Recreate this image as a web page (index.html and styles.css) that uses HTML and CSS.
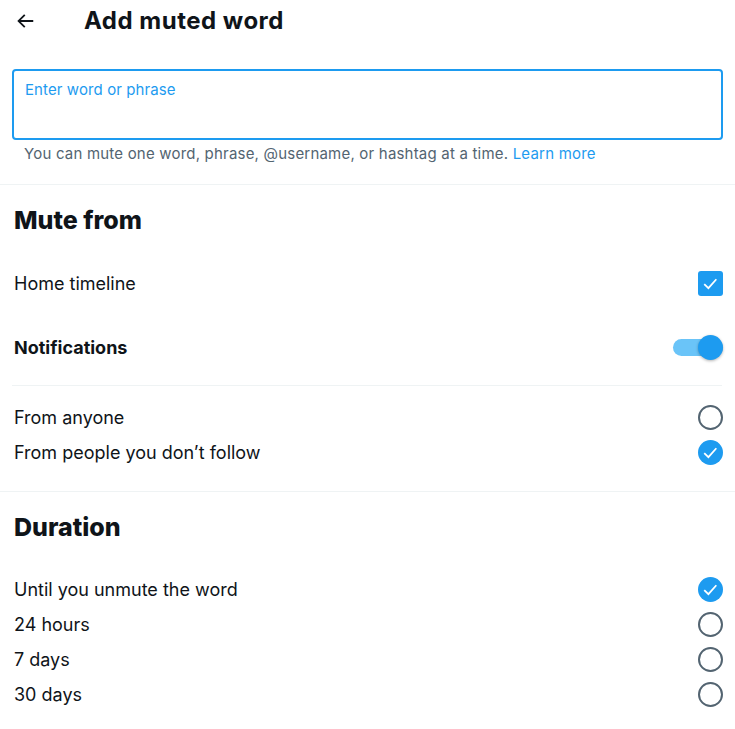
FILE: index.html
```html
<!DOCTYPE html>
<html lang="en">
<head>
    <meta charset="UTF-8">
    <meta name="viewport" content="width=device-width, initial-scale=1.0">
    <title>Add muted word</title>
    <link rel="stylesheet" href="styles.css">
</head>
<body>
    <div class="page">
        <div class="header">
            <button class="back" aria-label="Back">
                <svg viewBox="0 0 24 24" width="22" height="22"><path d="M7.414 13l5.043 5.04-1.414 1.42L3.586 12l7.457-7.46 1.414 1.42L7.414 11H21v2H7.414z"/></svg>
            </button>
            <h1>Add muted word</h1>
        </div>

        <div class="field">
            <label class="field-box">
                <span class="field-label">Enter word or phrase</span>
                <input type="text">
            </label>
            <p class="hint">You can mute one word, phrase, @username, or hashtag at a time. <a href="#">Learn more</a></p>
        </div>

        <div class="section">
            <h2>Mute from</h2>
            <div class="row">
                <span>Home timeline</span>
                <span class="checkbox checked">
                    <svg viewBox="0 0 24 24"><path d="M6 12.5l4 4 7.6-8.6"/></svg>
                </span>
            </div>
            <div class="row">
                <span class="bold">Notifications</span>
                <span class="toggle on"><span class="knob"></span></span>
            </div>
            <div class="inset-divider"></div>
            <div class="options">
                <div class="row small">
                    <span>From anyone</span>
                    <span class="radio"></span>
                </div>
                <div class="row small">
                    <span>From people you don’t follow</span>
                    <span class="radio checked">
                        <svg viewBox="0 0 24 24"><path d="M6 12.5l4 4 7.6-8.6"/></svg>
                    </span>
                </div>
            </div>
        </div>

        <div class="section">
            <h2>Duration</h2>
            <div class="options">
                <div class="row small">
                    <span>Until you unmute the word</span>
                    <span class="radio checked">
                        <svg viewBox="0 0 24 24"><path d="M6 12.5l4 4 7.6-8.6"/></svg>
                    </span>
                </div>
                <div class="row small">
                    <span>24 hours</span>
                    <span class="radio"></span>
                </div>
                <div class="row small">
                    <span>7 days</span>
                    <span class="radio"></span>
                </div>
                <div class="row small">
                    <span>30 days</span>
                    <span class="radio"></span>
                </div>
            </div>
        </div>
    </div>
</body>
</html>
```

FILE: styles.css
```css
body {
    margin: 0;
    padding: 0;
    background: #ffffff;
    color: #0f1419;
    font-family: 'Inter', 'Noto Sans', sans-serif;
}
.page {
    width: 735px;
}
.header {
    display: flex;
    align-items: center;
    height: 42px;
    padding: 0 14px;
}
.back {
    width: 22px;
    height: 22px;
    padding: 0;
    border: none;
    background: none;
    display: flex;
    align-items: center;
    justify-content: center;
    margin-right: 48px;
}
.back svg {
    fill: #0f1419;
}
h1 {
    margin: 0;
    font-size: 24px;
    line-height: 28px;
    font-weight: 700;
    letter-spacing: 0.5px;
}
.field {
    padding: 27px 12px 0 12px;
    border-bottom: 1px solid #eff3f4;
}
.field-box {
    display: block;
    height: 67px;
    border: 2px solid #1d9bf0;
    border-radius: 4px;
    padding: 0 11px;
}
.field-label {
    display: block;
    margin-top: 10px;
    font-size: 15px;
    line-height: 18px;
    letter-spacing: 0.1px;
    color: #1d9bf0;
}
.field-box input {
    border: none;
    outline: none;
    width: 100%;
    font-size: 17px;
    padding: 4px 0;
}
.hint {
    margin: 0;
    padding: 5px 12px 21px 12px;
    font-size: 15px;
    line-height: 18px;
    letter-spacing: 0.2px;
    color: #536471;
}
.hint a {
    color: #1d9bf0;
    text-decoration: none;
}
.section {
    padding: 0 13px 0 14px;
    border-bottom: 1px solid #eff3f4;
}
.section:last-child {
    border-bottom: none;
}
h2 {
    margin: 0;
    padding: 20px 0 16px;
    font-size: 25px;
    line-height: 30px;
    font-weight: 800;
    letter-spacing: 0;
}
.row {
    display: flex;
    align-items: center;
    justify-content: space-between;
    height: 64px;
    font-size: 18px;
}
.row.small {
    height: 35px;
}
.bold {
    font-weight: 700;
}
.options {
    padding: 14px 0 21px;
}
.inset-divider {
    height: 1px;
    background: #eff3f4;
    margin: 6px 0 0 -2px;
}
.checkbox {
    width: 25px;
    height: 25px;
    border-radius: 3px;
    background: #1d9bf0;
    display: flex;
    align-items: center;
    justify-content: center;
    margin-right: -1px;
}
.checkbox svg, .radio svg {
    flex: none;
    width: 25px;
    height: 25px;
    fill: none;
    stroke: #ffffff;
    stroke-width: 1.7;
}
.radio {
    box-sizing: border-box;
    width: 25px;
    height: 25px;
    border-radius: 50%;
    border: 2px solid #536471;
    display: flex;
    align-items: center;
    justify-content: center;
    margin-right: -1px;
}
.radio.checked {
    border: none;
    background: #1d9bf0;
}
.toggle {
    position: relative;
    width: 50px;
    height: 17px;
    border-radius: 9px;
    background: #6ac4f8;
    margin-right: -1px;
}
.knob {
    position: absolute;
    right: 0;
    top: -4px;
    width: 25px;
    height: 25px;
    border-radius: 50%;
    background: #1d9bf0;
    box-shadow: 0 1px 3px rgba(0, 0, 0, 0.3);
}
```
